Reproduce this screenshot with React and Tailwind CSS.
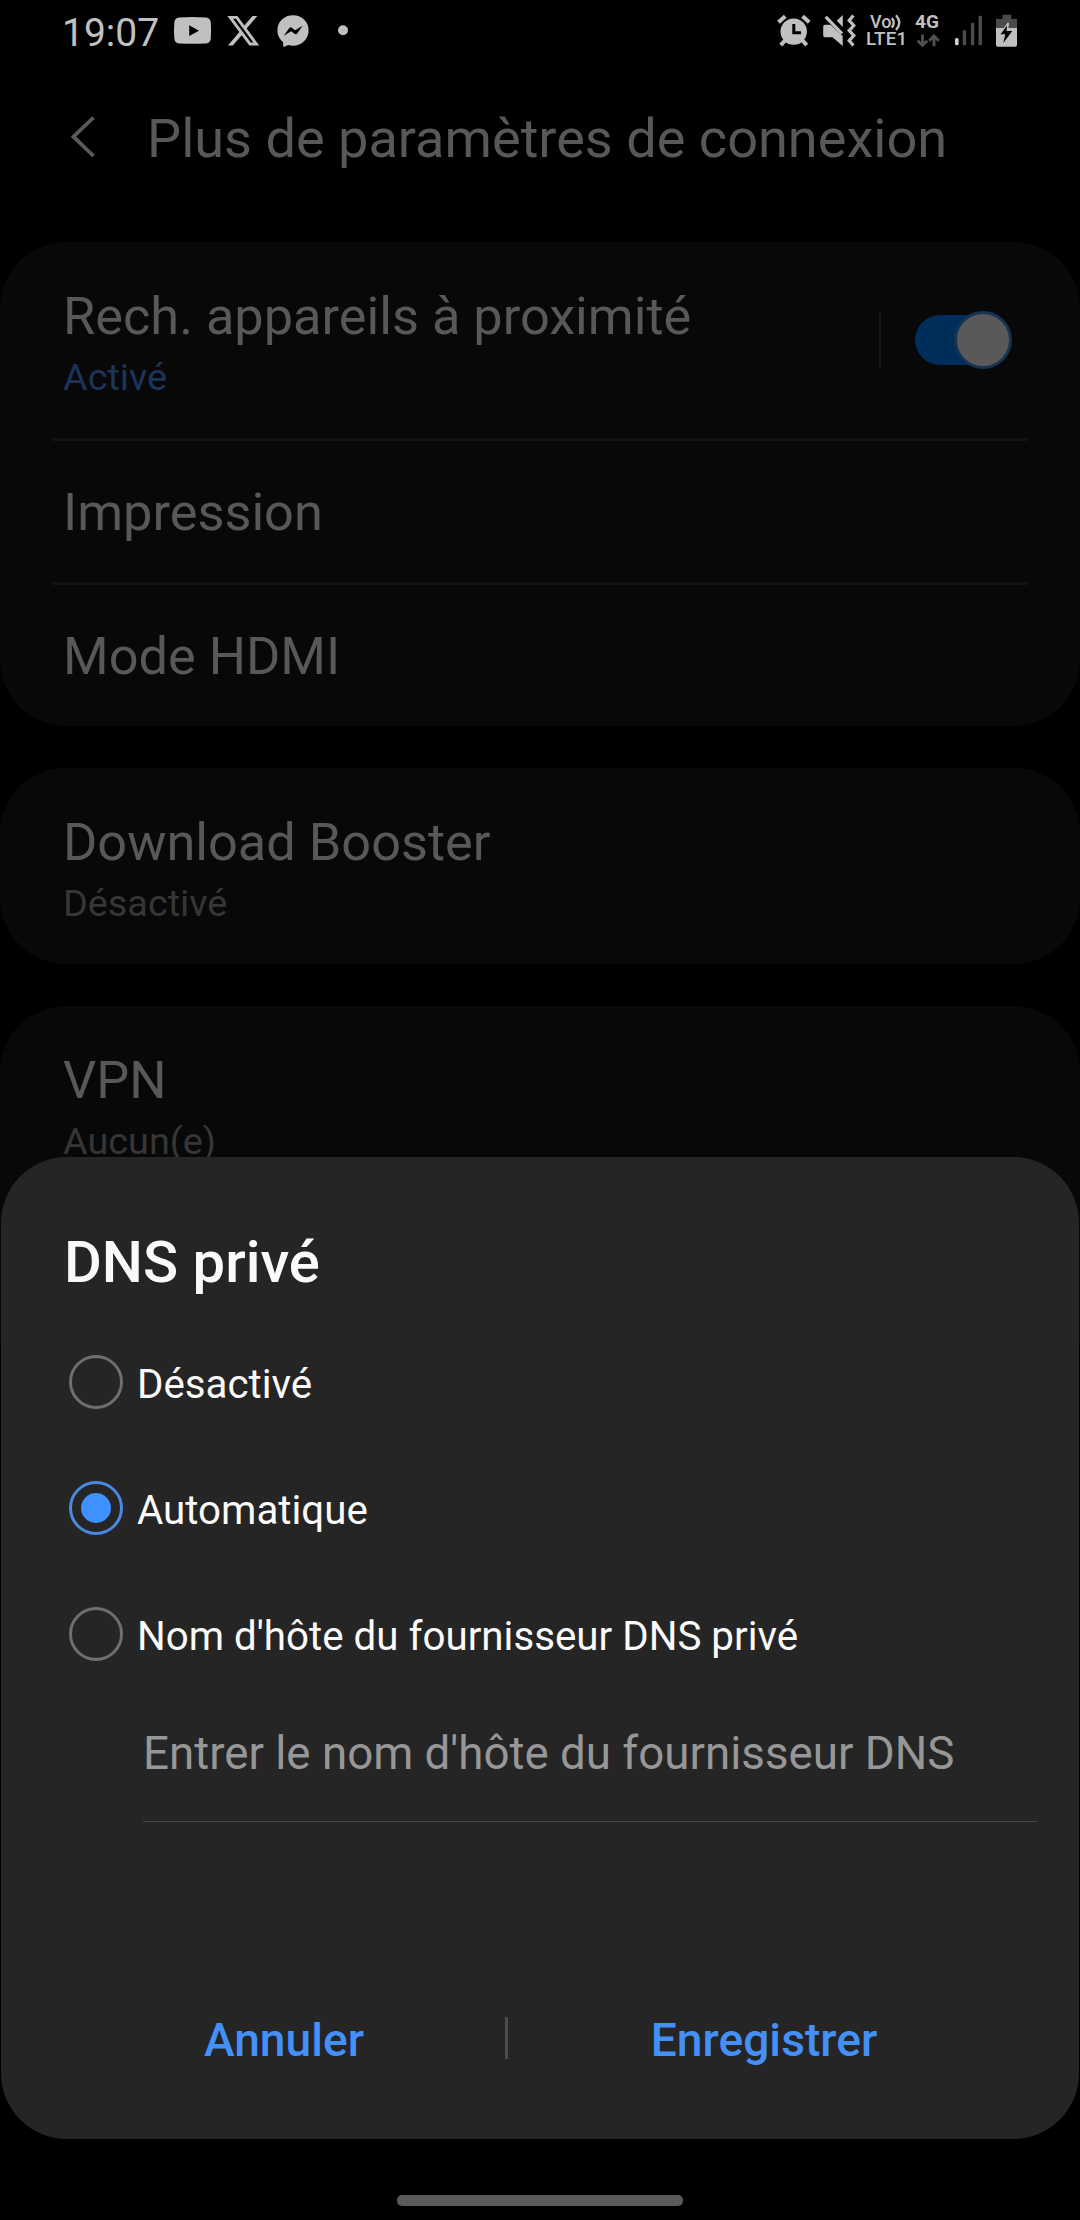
function StatusLeftIcons() {
  return (
    <svg className="ml-[5px] h-[46px] w-[190px] shrink-0" viewBox="164 8 190 46" fill="#c0c0c0">
      <path
        fillRule="evenodd"
        d="M179 17.6Q192.500 16.600 206 17.600Q210.400 18 210.800 22.500Q211.300 30.500 210.800 38.500Q210.400 43 206 43.400Q192.500 44.300 179 43.400Q174.700 43 174.300 38.500Q173.700 30.500 174.300 22.500Q174.700 18 179 17.600ZM189.200 25.300V36L199 30.700Z"
      />
      <g transform="translate(227.3 14.4) scale(1.33 1.36)">
        <path d="M18.901 1.153h3.68l-8.04 9.19L24 22.846h-7.406l-5.8-7.584-6.638 7.584H.474l8.6-9.83L0 1.154h7.594l5.243 6.932ZM17.61 20.644h2.039L6.486 3.24H4.298Z" />
      </g>
      <path d="M293 15.200A15.500 15 0 0 1 308.600 30.300A15.500 15.300 0 0 1 293 45.700Q290.500 45.700 288.300 45L284.200 46.800Q283.200 47.100 283.200 46V42.200A15.500 15.300 0 0 1 277.400 30.300A15.500 15 0 0 1 293 15.200Z" />
      <path d="M283.800 35.800L289.300 28Q290.300 26.700 291.700 27.700L295.200 30.300L302.600 25.700L297.200 33.600Q296.300 34.900 294.900 34L291.200 31.200Z" fill="#000" />
      <circle cx="343" cy="30.200" r="5" />
    </svg>
  );
}

function AlarmMuteIcons() {
  return (
    <svg className="h-[46px] w-[90px] shrink-0" viewBox="770 8 90 46" fill="#c0c0c0">
      <circle cx="793.7" cy="31.600" r="13.200" />
      <g stroke="#c0c0c0" strokeWidth="4" fill="none">
        <path d="M778.500 22.300L785.200 16.300M802.600 16.300L809.200 22.300" />
        <path d="M785 40.500L780.800 45.200M802.500 40.500L806.700 45.200" />
      </g>
      <path d="M793.800 24V32.800H801" fill="none" stroke="#000" strokeWidth="3" />
      <path d="M823.200 26.500Q823.200 24.700 825 24.700H830.500L842.700 36V46L832.500 37.200H825Q823.200 37.200 823.200 35.500Z" />
      <path d="M825.700 16.800L842 33.500" fill="none" stroke="#c0c0c0" strokeWidth="3.200" />
      <path d="M836.800 20.800L842.800 15V27Z" />
      <path
        d="M853.400 15.500L849.200 20.500L853.800 25.500L849.200 30.600L853.800 35.600L849.200 40.600L853.400 45.500"
        fill="none"
        stroke="#c0c0c0"
        strokeWidth="3.200"
      />
    </svg>
  );
}

function VolteBadge() {
  return (
    <div className="ml-[6px] flex w-[41px] flex-col pt-[6px] font-medium text-[#c0c0c0]">
      <div className="flex h-[16px] items-center pl-[4px]">
        <span className="text-[18px] leading-[16px]">Vo</span>
        <svg className="h-[17px] w-[12px] shrink-0" viewBox="0 0 12 17" fill="none" stroke="#c0c0c0" strokeWidth="2.300">
          <path d="M0.800 4Q4.600 8.800 0.800 13.600M5 1.200Q11.600 8.600 5 16" />
        </svg>
      </div>
      <span className="mt-[1px] text-[18.800px] leading-[17px] tracking-[0.200px]">LTE1</span>
    </div>
  );
}

function NetworkBadge() {
  return (
    <div className="ml-[8px] flex w-[26px] flex-col pt-[5px] text-[#c0c0c0]">
      <span className="text-[19px] leading-[17px] font-bold">4G</span>
      <svg className="mt-[4px] h-[14px] w-[26px]" viewBox="915 34 26 14" fill="none" stroke="#505050" strokeWidth="2.900">
        <path d="M922.500 34.500V45M917.700 40.700L922.500 45.300L927.300 40.700" />
        <path d="M934 46.300V36.500M929.200 40.700L934 36L938.800 40.700" />
      </svg>
    </div>
  );
}

function SignalBatteryIcons() {
  return (
    <svg className="ml-[9px] h-[46px] w-[75px] shrink-0" viewBox="950 8 75 46">
      <rect x="955" y="38" width="3.600" height="7.300" rx="1.500" fill="#d0d0d0" />
      <g fill="#4b4b4b">
        <rect x="962.700" y="30.300" width="3.500" height="15" rx="1.200" />
        <rect x="970.800" y="22.700" width="3.500" height="22.600" rx="1.200" />
        <rect x="978.500" y="15.700" width="3.500" height="29.600" rx="1.200" />
        <path d="M1002.500 14.700H1011.300V19H1017V28H996V19H1002.500Z" />
      </g>
      <path d="M996 28H1017V45Q1017 46.800 1015.200 46.800H997.800Q996 46.800 996 45Z" fill="#c0c0c0" />
      <path d="M1008.300 23L1000.800 33.800H1005.700L1003.600 43L1012.500 31.200H1007.200Z" fill="#c0c0c0" stroke="#c0c0c0" strokeWidth="1.600" />
      <path d="M1007 25.500L1000.500 34.300H1005.300L1003.300 43L1012.300 31H1006.600Z" fill="#000" />
    </svg>
  );
}

function SettingRow({ title, value, accent, children }) {
  return (
    <div className="flex h-[196px] pt-[43px] pr-[69px] pl-[63px]">
      <div className="flex flex-1 flex-col">
        <span className="text-[52.300px] leading-[62px] text-[#585858]">{title}</span>
        <span className={`mt-[6px] text-[37.800px] leading-[48px] ${accent ? "text-[#1c3459]" : "text-[#363636]"}`}>{value}</span>
      </div>
      {children}
    </div>
  );
}

function SimpleRow({ title }) {
  return <div className="flex h-[141px] items-center pl-[63px] text-[52.300px] leading-[62px] text-[#585858]">{title}</div>;
}

function Divider() {
  return <div className="mx-[52px] h-[3px] bg-[#121212]" />;
}

function Toggle() {
  return (
    <div className="mt-[26px] flex h-[58px] items-center">
      <div className="h-[58px] w-[2px] bg-[#141414]" />
      <div className="ml-[34px] flex h-[50px] w-[96px] items-center justify-end rounded-full bg-[#002e5b]">
        <div className="-mr-px size-[58px] shrink-0 rounded-full border-[3px] border-[#163353] bg-[#595959]" />
      </div>
    </div>
  );
}

function RadioRow({ label, checked }) {
  return (
    <label className="flex h-[126px] items-center gap-[14px] pl-[68px]">
      <span className={`flex size-[54px] items-center justify-center rounded-full border-[3px] ${checked ? "border-[#4b88df]" : "border-[#6f6f6f]"}`}>
        {checked && <span className="size-[30px] rounded-full bg-[#3e91ff]" />}
      </span>
      <span className="pt-[5px] text-[40.300px] leading-[48px] text-[#fafafa]">{label}</span>
    </label>
  );
}

function DnsDialog() {
  return (
    <section className="absolute top-[1157px] left-px flex h-[982px] w-[1078px] flex-col rounded-[66px] bg-[#252525] pt-[71px]">
      <h2 className="pl-[63px] text-[58px] leading-[68px] font-medium text-[#fafafa]">DNS privé</h2>
      <div className="mt-[23px] flex flex-col">
        <RadioRow label="Désactivé" />
        <RadioRow label="Automatique" checked />
        <RadioRow label="Nom d'hôte du fournisseur DNS privé" />
      </div>
      <div className="mr-[42px] ml-[142px] h-[125px] border-b border-[#484848] pt-[29px] text-[45.700px] leading-[56px] whitespace-nowrap text-[#979797]">
        Entrer le nom d'hôte du fournisseur DNS
      </div>
      <div className="mt-[174px] flex h-[84px] items-center pr-[59px] pl-[62px] text-[46.200px] leading-[54px] font-medium text-[#448ff8]">
        <button className="w-[442px] pt-[3px]">Annuler</button>
        <div className="h-[42px] w-[3px] bg-[#4c4c4c]" />
        <button className="flex-1 pt-[3px]">Enregistrer</button>
      </div>
    </section>
  );
}

export default function App() {
  return (
    <div className="relative flex h-[2220px] w-[1080px] flex-col overflow-hidden bg-black font-[Roboto,sans-serif]">
      <div className="flex h-[62px] pt-[8px] pl-[62px]">
        <span className="w-[97px] pt-[2px] text-[39px] leading-[46px] text-[#c0c0c0]">19:07</span>
        <StatusLeftIcons />
        <div className="ml-auto flex pr-[55px]">
          <AlarmMuteIcons />
          <VolteBadge />
          <NetworkBadge />
          <SignalBatteryIcons />
        </div>
      </div>
      <header className="flex h-[180px] pt-[45px] pl-[68px]">
        <svg className="mt-[7px] h-[46px] w-[30px]" viewBox="0 0 30 46" fill="none" stroke="#5a5a5a" strokeWidth="3.800">
          <path d="M25.500 3.500L5.500 22.700L25.500 42" />
        </svg>
        <h1 className="ml-[49px] text-[54.100px] leading-[64px] text-[#585858]">Plus de paramètres de connexion</h1>
      </header>
      <main className="flex flex-1 flex-col gap-[42px] overflow-hidden">
        <section className="shrink-0 rounded-[66px] bg-[#080808]">
          <SettingRow title="Rech. appareils à proximité" value="Activé" accent>
            <Toggle />
          </SettingRow>
          <Divider />
          <SimpleRow title="Impression" />
          <Divider />
          <SimpleRow title="Mode HDMI" />
        </section>
        <section className="shrink-0 rounded-[66px] bg-[#080808]">
          <SettingRow title="Download Booster" value="Désactivé" />
        </section>
        <section className="h-[395px] shrink-0 rounded-[66px] bg-[#080808]">
          <SettingRow title="VPN" value="Aucun(e)" />
        </section>
      </main>
      <div className="flex h-[25px] justify-center">
        <div className="h-[11px] w-[286px] rounded-[5px] bg-[#5a5a5a]" />
      </div>
      <DnsDialog />
    </div>
  );
}
